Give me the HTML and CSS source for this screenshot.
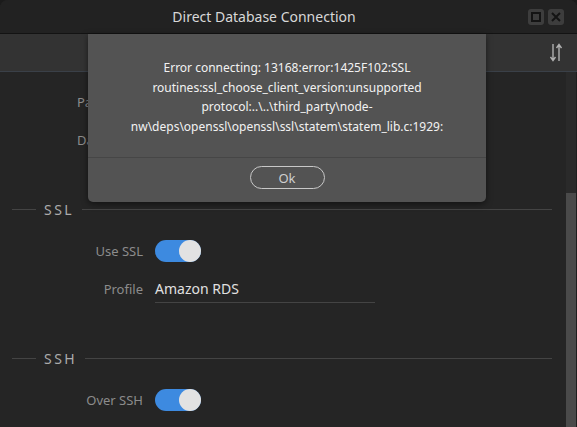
FILE: index.html
```html
<!DOCTYPE html>
<html lang="en">
<head>
    <meta charset="UTF-8">
    <title>Direct Database Connection</title>
    <link rel="stylesheet" href="styles.css">
</head>
<body>
    <div class="window">
        <header class="titlebar">
            <span class="title">Direct Database Connection</span>
            <div class="win-buttons">
                <span class="win-btn">
                    <svg width="10" height="10" viewBox="0 0 10 10"><rect x="1" y="1" width="8" height="8" fill="none" stroke="#141414" stroke-width="2"/></svg>
                </span>
                <span class="win-btn">
                    <svg width="10" height="10" viewBox="0 0 10 10"><path d="M1 1 L9 9 M9 1 L1 9" stroke="#141414" stroke-width="2" fill="none"/></svg>
                </span>
            </div>
        </header>

        <div class="toolbar">
            <svg class="sort-icon" width="12" height="19" viewBox="0 0 12 19">
                <path d="M3 1 V17 M0.5 14 L3 17.5 L5.5 14" stroke="#b0b0b0" stroke-width="1.4" fill="none"/>
                <path d="M9 18 V2 M6.5 5 L9 1.5 L11.5 5" stroke="#b0b0b0" stroke-width="1.4" fill="none"/>
            </svg>
        </div>

        <div class="main">
            <div class="form">
                <div class="row connection">
                    <span class="label">Password</span>
                    <span class="input"></span>
                </div>
                <div class="row connection">
                    <span class="label">Database</span>
                    <span class="input"></span>
                </div>

                <div class="section"><span>SSL</span></div>
                <div class="row">
                    <span class="label">Use SSL</span>
                    <span class="toggle on"></span>
                </div>
                <div class="row">
                    <span class="label">Profile</span>
                    <span class="input">Amazon RDS</span>
                </div>

                <div class="section"><span>SSH</span></div>
                <div class="row">
                    <span class="label">Over SSH</span>
                    <span class="toggle on"></span>
                </div>
            </div>
            <div class="scrollbar"><div class="thumb"></div></div>
        </div>

        <div class="modal">
            <div class="modal-message">
                Error connecting: 13168:error:1425F102:SSL<br>
                routines:ssl_choose_client_version:unsupported<br>
                protocol:..\..\third_party\node-<br>
                nw\deps\openssl\openssl\ssl\statem\statem_lib.c:1929:
            </div>
            <div class="modal-footer">
                <button class="btn-ok">Ok</button>
            </div>
        </div>
    </div>
</body>
</html>
```

FILE: styles.css
```css
* { box-sizing: border-box; }
body {
    margin: 0;
    background: #1b1b1b;
    font-family: "Noto Sans", "Liberation Sans", sans-serif;
}
.window {
    position: relative;
    width: 577px;
    height: 427px;
    overflow: hidden;
    background: #252525;
    border-radius: 8px 8px 0 0;
    display: flex;
    flex-direction: column;
}
.titlebar {
    height: 34px;
    flex-shrink: 0;
    display: flex;
    align-items: center;
    background: #222;
    border-bottom: 1px solid #131313;
    padding-right: 13px;
}
.title {
    flex: 1;
    text-align: center;
    color: #d8d8d8;
    font-size: 14px;
}
.win-buttons { display: flex; gap: 4px; }
.win-btn {
    width: 16px;
    height: 16px;
    border-radius: 3px;
    background: #3d3d3d;
    display: flex;
    align-items: center;
    justify-content: center;
}
.toolbar {
    height: 38px;
    flex-shrink: 0;
    background: #333;
    border-bottom: 1px solid #3a4048;
    display: flex;
    align-items: center;
    justify-content: flex-end;
    padding-right: 15px;
}
.main { flex: 1; display: flex; min-height: 0; }
.form { flex: 1; padding-top: 11px; }
.row {
    display: grid;
    grid-template-columns: 143px 1fr;
    column-gap: 12px;
    align-items: center;
    height: 38px;
}
.label {
    text-align: right;
    color: #8c8c8c;
    font-size: 13px;
}
.connection .label {
    text-align: left;
    padding-left: 77px;
}
.input {
    display: block;
    width: 220px;
    padding: 3px 0 4px;
    line-height: 19px;
    min-height: 27px;
    border-bottom: 1px solid #444;
    color: #e0e0e0;
    font-size: 14px;
}
.section {
    display: flex;
    align-items: center;
    gap: 8px;
    margin: 40px 14px 13px 12px;
    height: 20px;
    color: #ababab;
    font-size: 14px;
    letter-spacing: 2.5px;
}
.section::before {
    content: "";
    width: 24px;
    border-top: 1px solid #444;
}
.section::after {
    content: "";
    flex: 1;
    border-top: 1px solid #444;
}
.toggle {
    position: relative;
    width: 46px;
    height: 22px;
    border-radius: 11px;
    background: #3d8ae0;
}
.toggle::after {
    content: "";
    position: absolute;
    right: 0;
    top: 0;
    width: 22px;
    height: 22px;
    border-radius: 50%;
    background: #e2e2e2;
}
.scrollbar {
    width: 11px;
    display: flex;
    flex-direction: column;
    background: #2a2a2a;
    border-right: 1px solid #1e1e1e;
}
.thumb {
    flex: 1;
    margin-top: 121px;
    background: #4a4a4a;
}
.modal {
    position: absolute;
    top: 34px;
    left: 88px;
    width: 398px;
    height: 168px;
    background: #535353;
    border-radius: 0 0 5px 5px;
    box-shadow: 0 2px 6px rgba(0, 0, 0, 0.5);
    display: flex;
    flex-direction: column;
}
.modal-message {
    height: 123px;
    padding-top: 3px;
    display: flex;
    align-items: center;
    justify-content: center;
    text-align: center;
    color: #f2f2f2;
    font-size: 12px;
    line-height: 19.5px;
}
.modal-footer {
    flex: 1;
    border-top: 1px solid #464646;
    display: flex;
    justify-content: center;
    padding-top: 8px;
}
.btn-ok {
    width: 75px;
    height: 23px;
    border: 1px solid #c8c8c8;
    border-radius: 12px;
    background: transparent;
    color: #cfcfcf;
    font-family: inherit;
    font-size: 13px;
    padding: 0;
}
```
